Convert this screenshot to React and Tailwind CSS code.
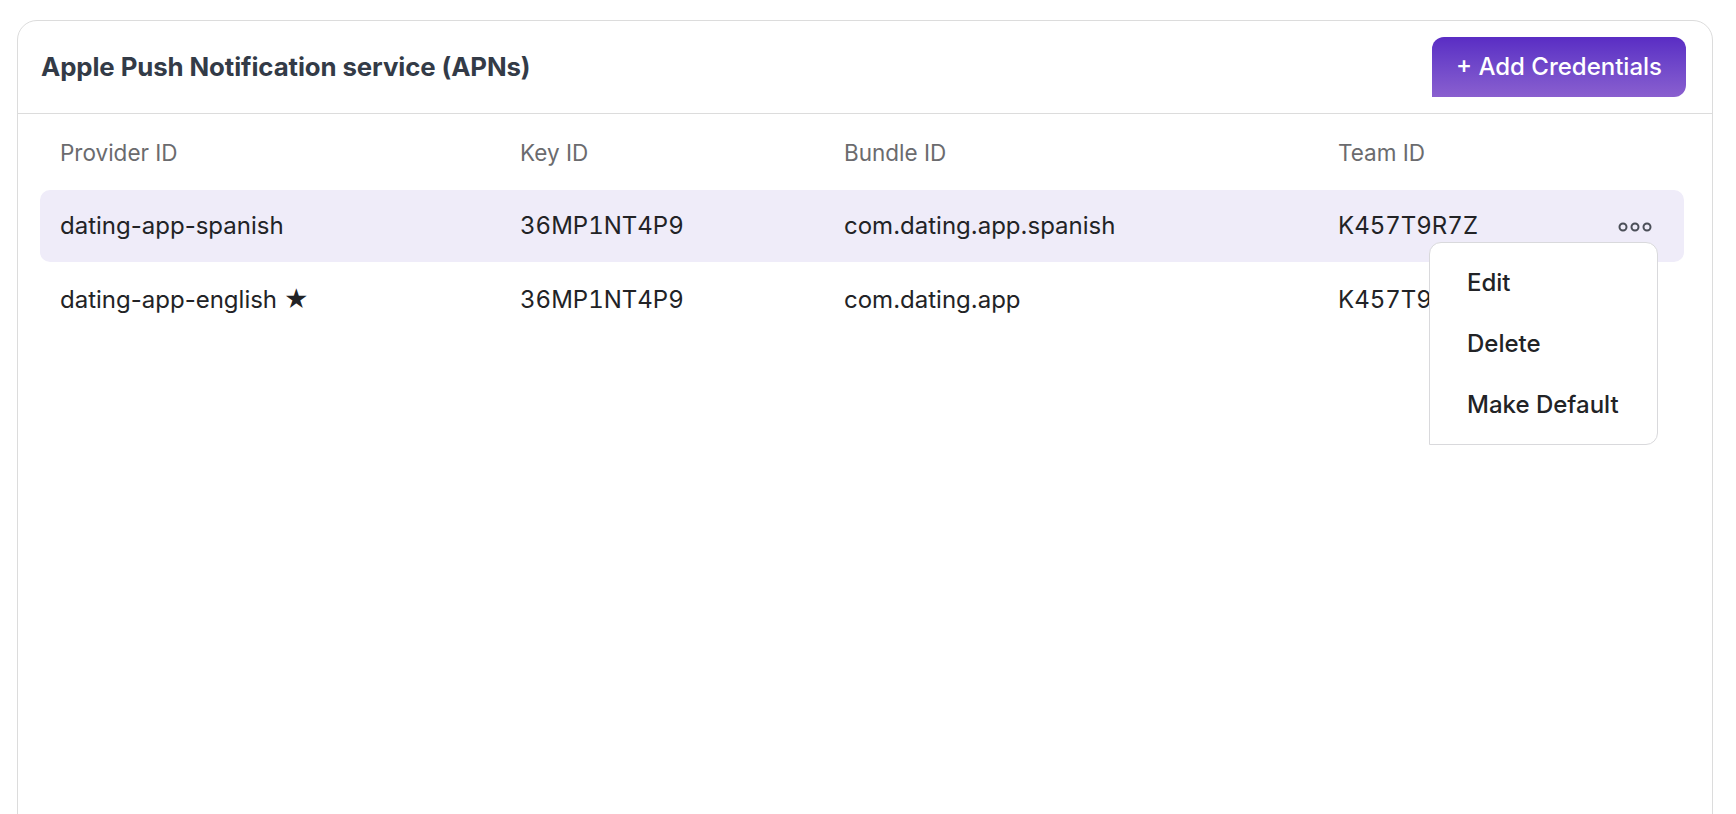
import { useState } from 'react';

const providers = [
    { id: 'dating-app-spanish', keyId: '36MP1NT4P9', bundle: 'com.dating.app.spanish', team: 'K457T9R7Z', isDefault: false },
    { id: 'dating-app-english', keyId: '36MP1NT4P9', bundle: 'com.dating.app', team: 'K457T9R7Z', isDefault: true },
];

const cols = 'grid grid-cols-[460px_324px_494px_1fr] items-center';

function DotsIcon() {
    return (
        <svg width="34" height="10" viewBox="0 0 34 10" fill="none" stroke="#4b4f58" strokeWidth="2">
            <circle cx="5" cy="5" r="3.5" />
            <circle cx="17" cy="5" r="3.5" />
            <circle cx="29" cy="5" r="3.5" />
        </svg>
    );
}

export default function App() {
    const [openMenu, setOpenMenu] = useState(0);

    return (
        <div className="min-h-screen bg-white pt-[20px] pl-[17px] pr-[23px] font-['Inter',sans-serif] overflow-hidden h-[814px]">
            <div className="border border-[#dcdcdc] rounded-t-[20px] h-[900px] bg-white">
                {/* Header */}
                <div className="flex items-center justify-between pl-[23px] pr-[26px] py-4 border-b border-[#dcdcdc]">
                    <h1 className="text-[25.8px] font-bold text-[#333b47] tracking-[-0.1px]">
                        Apple Push Notification service (APNs)
                    </h1>
                    <button className="h-[60px] w-[254px] rounded-xl rounded-bl-none bg-gradient-to-b from-[#5a2cc4] to-[#8a5fcf] text-white text-[24px] font-medium">
                        + Add Credentials
                    </button>
                </div>

                {/* Table */}
                <div className="pl-[22px] pr-[28px] flex flex-col gap-[2px]">
                    <div className={`${cols} h-[74px] pt-[3px] px-5 text-[22.5px] text-[#6b6b6e]`}>
                        <div>Provider ID</div>
                        <div>Key ID</div>
                        <div>Bundle ID</div>
                        <div>Team ID</div>
                    </div>

                    {providers.map((p, i) => (
                        <div
                            key={p.id}
                            className={`relative ${cols} h-[72px] pl-5 pr-[32px] rounded-[10px] text-[24px] text-[#222326] ${openMenu === i ? 'bg-[#efecf9]' : ''}`}
                        >
                            <div>{p.id}{p.isDefault && ' ★'}</div>
                            <div className="tabular-nums">{p.keyId}</div>
                            <div>{p.bundle}</div>
                            <div className="flex items-center justify-between">
                                <span className="tabular-nums">{p.team}</span>
                                {openMenu === i && (
                                    <button onClick={() => setOpenMenu(null)} className="pt-[2px]">
                                        <DotsIcon />
                                    </button>
                                )}
                            </div>

                            {openMenu === i && (
                                <div className="absolute right-[26px] top-[52px] z-10 w-[229px] pt-[9px] pb-[9px] bg-white border border-[#d9d9dc] rounded-xl rounded-bl-none">
                                    {['Edit', 'Delete', 'Make Default'].map((label) => (
                                        <div key={label} className="h-[61px] flex items-center pl-[37px] text-[24px] font-medium text-[#222326]">
                                            {label}
                                        </div>
                                    ))}
                                </div>
                            )}
                        </div>
                    ))}
                </div>
            </div>
        </div>
    );
}
